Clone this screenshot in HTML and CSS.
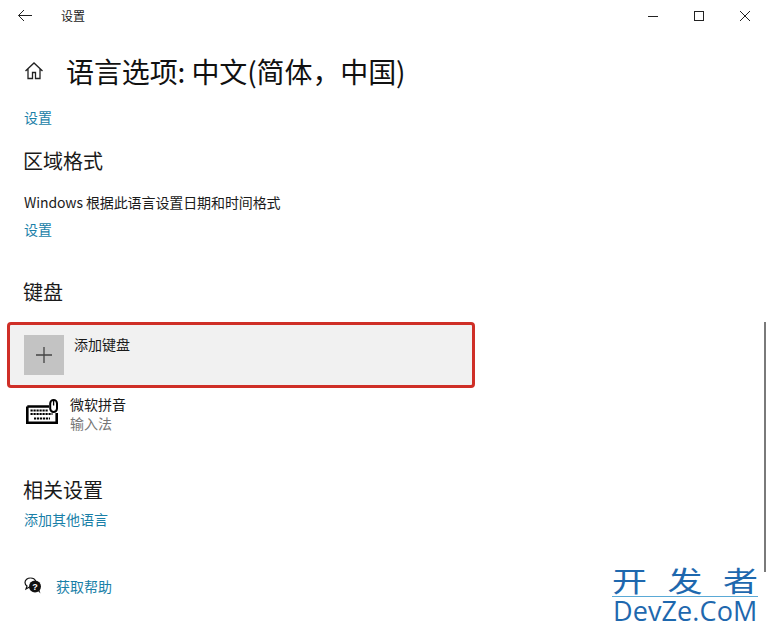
FILE: index.html
```html
<!DOCTYPE html>
<html lang="zh-CN">
<head>
<meta charset="utf-8">
<title>设置</title>
<link rel="stylesheet" href="styles.css">
</head>
<body>
<div class="window">
  <header class="titlebar">
    <svg class="back" width="16" height="14" viewBox="0 0 16 14"><path d="M7 1 1.500 6.500 7 12M1.500 6.500H15" fill="none" stroke="#222" stroke-width="1"/></svg>
    <span class="app-name">设置</span>
    <div class="controls">
      <svg width="12" height="12" viewBox="0 0 12 12"><path d="M1 6.500H11" stroke="#222" fill="none"/></svg>
      <svg width="12" height="12" viewBox="0 0 12 12"><rect x="1.500" y="1.500" width="9" height="9" stroke="#222" fill="none"/></svg>
      <svg width="12" height="12" viewBox="0 0 12 12"><path d="M1 1 11 11M11 1 1 11" stroke="#222" fill="none"/></svg>
    </div>
  </header>

  <div class="page-head">
    <svg class="home" width="20" height="20" viewBox="0 0 20 20"><path d="M1.500 10 10 2l8.500 8M4 8v9.500h4.500V11.500h3V17.500H16V8" fill="none" stroke="#222" stroke-width="1.300"/></svg>
    <h1 class="page-title">语言选项: 中文(简体，中国)</h1>
  </div>

  <main class="content">
    <a class="link first-link">设置</a>
    <h2 class="section region">区域格式</h2>
    <p class="desc">Windows 根据此语言设置日期和时间格式</p>
    <a class="link">设置</a>
    <h2 class="section keyboard">键盘</h2>

    <div class="add-row">
      <span class="add-tile">
        <svg width="16" height="16" viewBox="0 0 16 16"><path d="M8 0V16M0 8H16" stroke="#444" stroke-width="1.300" fill="none"/></svg>
      </span>
      <span class="add-label">添加键盘</span>
    </div>

    <div class="ime-row">
      <svg class="kbd" width="32" height="25" viewBox="0 0 32 25">
        <path d="M1.300 7.500H23M30.700 14V23.700H1.300V7.500" fill="none" stroke="#000" stroke-width="2.600"/>
        <path d="M4.500 11.500h18M4.500 15h22M8 19.500h16" stroke="#000" stroke-width="2.200" stroke-dasharray="2.200 0.800" fill="none"/>
        <rect x="24.200" y="1" width="6.800" height="12" rx="3.400" fill="#fff" stroke="#000" stroke-width="2"/>
        <path d="M27.600 2V6.500" stroke="#000" stroke-width="1.300"/>
      </svg>
      <div class="ime-text">
        <span class="ime-name">微软拼音</span>
        <span class="ime-sub">输入法</span>
      </div>
    </div>

    <h2 class="section related">相关设置</h2>
    <a class="link">添加其他语言</a>

    <div class="help">
      <svg width="18" height="18" viewBox="0 0 18 18">
        <path d="M6.500 1C3.500 1 1 3 1 5.500 1 7 1.800 8.300 3 9L2 12l3.500-2" fill="#fff" stroke="#111" stroke-width="1.200"/>
        <path d="M6.500 1C9 1 11 2.300 11.700 4" fill="none" stroke="#111" stroke-width="1.200"/>
        <circle cx="11" cy="9.500" r="6" fill="#111"/>
        <path d="M14 14l2.500 2.500L15 12z" fill="#111"/>
        <text x="11" y="12.500" class="help-mark">?</text>
      </svg>
      <a class="link help-link">获取帮助</a>
    </div>
  </main>

  <div class="scrollbar"></div>

  <div class="watermark">
    <div class="wm-cn"><span class="wm-char">开</span><span class="wm-char">发</span><span class="wm-char">者</span></div>
    <div class="wm-en">DevZe.CoM</div>
  </div>
</div>
</body>
</html>
```

FILE: styles.css
```css
* { box-sizing: border-box; }
html, body { margin: 0; padding: 0; background: #fff; }
body { font-family: "Noto Sans CJK SC", "Noto Sans", sans-serif; color: #1a1a1a; }
.window { position: relative; width: 768px; height: 632px; overflow: hidden; }

.titlebar { display: flex; align-items: center; height: 32px; padding-left: 17px; }
.back { flex: none; }
.app-name { margin-left: 28px; font-size: 12px; line-height: 32px; }
.controls { display: flex; gap: 34px; margin-left: auto; margin-right: 17px; }

.page-head { display: flex; align-items: center; height: 48px; margin-top: 15px; padding-left: 24px; }
.home { flex: none; }
.page-title { margin: 0 0 0 22px; font-size: 28px; font-weight: 400; line-height: 48px; letter-spacing: -0.1px; color: #111; }

.content { display: flex; flex-direction: column; align-items: flex-start; padding-left: 24px; }
.link { display: block; font-size: 14px; line-height: 20px; color: #1a7fa8; }
.first-link { margin-top: 12px; }
.section { margin: 0 0 0 -1px; font-size: 20px; font-weight: 400; line-height: 28px; color: #1a1a1a; }
.region { margin-top: 20px; }
.desc { margin: 17px 0 7px; font-size: 14px; line-height: 20px; letter-spacing: -0.1px; }
.keyboard { margin-top: 39px; }

.add-row { display: flex; align-items: flex-start; width: 468px; height: 66px; margin: 16px 0 0 -17px; padding: 10px 0 0 14px; background: #f1f1f1; border: 3px solid #cf2f27; border-radius: 4px; }
.add-tile { display: flex; align-items: center; justify-content: center; width: 40px; height: 40px; background: #c3c3c3; }
.add-label { margin-left: 10px; font-size: 14px; line-height: 18px; }

.ime-row { display: flex; align-items: flex-start; margin-top: 7px; }
.kbd { margin-top: 4px; margin-left: 2px; flex: none; }
.ime-text { display: flex; flex-direction: column; margin-left: 12px; }
.ime-name { font-size: 14px; line-height: 19px; }
.ime-sub { font-size: 14px; line-height: 19px; color: #777; }

.related { margin-top: 43px; margin-bottom: 5px; }

.help { display: flex; align-items: center; margin-top: 47px; }
.help-link { margin-left: 14px; }
.help-mark { font-family: "Liberation Sans", sans-serif; font-size: 9px; font-weight: 700; fill: #fff; text-anchor: middle; }

.scrollbar { position: absolute; left: 764px; top: 322px; width: 2px; height: 250px; background: #7a7a7a; }

.watermark { position: absolute; left: 612px; top: 561px; width: 146px; color: #1e68ae; }
.wm-cn { display: flex; justify-content: space-between; height: 36px; border-bottom: 1px solid #5aa9d6; }
.wm-char { display: block; font-size: 35px; line-height: 36px; transform: scaleY(0.8); transform-origin: center 22px; }
.wm-en { font-family: "Open Sans", sans-serif; font-size: 27px; line-height: 28px; white-space: nowrap; padding-left: 1px; letter-spacing: 0.1px; }
```
